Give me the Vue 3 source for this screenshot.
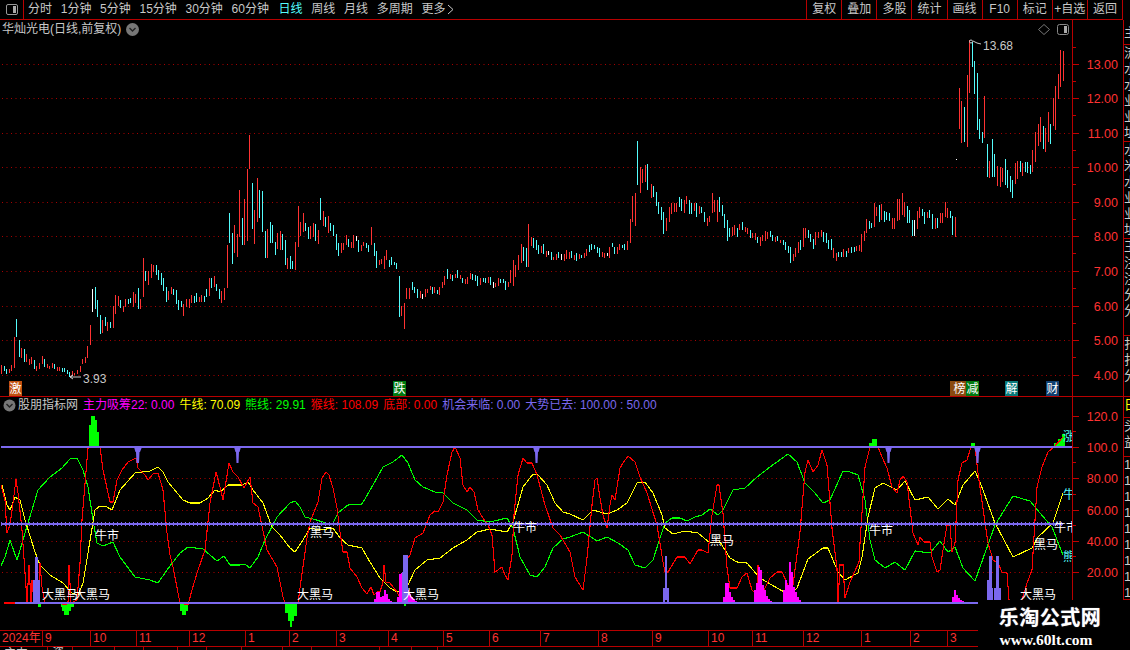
<template>
  <div class="app">
    <!-- top toolbar -->
    <div class="toolbar">
      <div class="panel-btn">
        <span class="panel-icon"><i></i></span>
      </div>
      <div class="periods">
        <span v-for="p in periods" :key="p" class="period" :class="{ active: p === '日线' }">{{ p }}</span>
        <span class="period more">更多
          <svg width="7" height="11" viewBox="0 0 7 11" fill="none" stroke="#c8c8c8" stroke-width="1"><polyline points="1,1 6,5.5 1,10" /></svg>
        </span>
      </div>
      <div class="actions">
        <span v-for="a in actions" :key="a" class="action">{{ a }}</span>
      </div>
    </div>

    <div class="workspace">
      <!-- price pane -->
      <div class="pane main-pane">
        <div class="pane-title">
          <span>华灿光电(日线,前复权)</span>
          <svg class="drop" width="13" height="13" viewBox="0 0 13 13"><circle cx="6.5" cy="6.5" r="6.5" fill="#777" /><polyline points="3.5,5 6.5,8 9.5,5" fill="none" stroke="#222" stroke-width="1.4" /></svg>
        </div>
        <svg class="chart" width="1072" height="376" viewBox="0 20 1072 376">
          <line v-for="y in priceGrid" :key="y" x1="2" x2="1072" :y1="y + 0.5" :y2="y + 0.5" class="dots" />
          <path :d="barPath.r" class="bar" stroke="#ff3232" />
          <path :d="barPath.c" class="bar" stroke="#54fcfc" />
          <path :d="barPath.w" class="bar" stroke="#ffffff" />
          <rect x="956" y="159" width="1" height="1" fill="#fff" />
          <!-- high / low labels -->
          <polyline points="81,377 70,377 73,375 70,377 73,379" fill="none" stroke="#c8c8c8" />
          <text x="83" y="383" class="tag">3.93</text>
          <circle cx="971" cy="41.5" r="1.5" fill="none" stroke="#c8c8c8" />
          <polyline points="973,41 977,43 981,44" fill="none" stroke="#c8c8c8" />
          <text x="983" y="50" class="tag">13.68</text>
          <!-- diamond and pane button -->
          <polygon points="1044,24.5 1049.5,29.5 1044,34.5 1038.5,29.5" fill="none" stroke="#777" />
          <rect x="1057.5" y="24.5" width="11" height="10" rx="2" fill="none" stroke="#888" />
          <rect x="1064" y="26" width="3" height="7" fill="#aaa" />
          <!-- event markers -->
          <g v-for="m in markers" :key="m.text">
            <rect :x="m.x" y="381" :width="m.w" height="15" :fill="m.bg" />
            <text :x="m.x + m.w - 6.5" y="393" class="marker">{{ m.text }}</text>
          </g>
        </svg>
        <svg class="axis" width="50" height="376" viewBox="1073 20 50 376">
          <g v-for="(t, i) in priceTicks" :key="t.label">
            <line x1="1073" x2="1079" :y1="t.y + 0.5" :y2="t.y + 0.5" class="tick" />
            <line v-if="i < 9" x1="1073" x2="1076" :y1="t.y + 17.5" :y2="t.y + 17.5" class="tick" />
            <text x="1118" :y="t.y + 5" class="axis-label">{{ t.label }}</text>
          </g>
          <line x1="1073" x2="1076" y1="47.5" y2="47.5" class="tick" />
        </svg>
      </div>

      <!-- side strip -->
      <div class="strip">
        <div v-for="(s, i) in strip" :key="i" class="strip-sec" :style="{ height: s.h + 'px', color: s.color }">
          <div v-for="(c, j) in s.text" :key="j">{{ c }}</div>
        </div>
      </div>

      <!-- indicator pane -->
      <div class="pane ind-pane">
        <div class="ind-title">
          <svg width="13" height="13" viewBox="0 0 13 13"><circle cx="6.5" cy="6.5" r="6" fill="#777" /><polyline points="3.5,5 6.5,8 9.5,5" fill="none" stroke="#222" stroke-width="1.4" /></svg>
          <span class="ind-name">股朋指标网</span>
          <span v-for="l in legend" :key="l.text" :style="{ color: l.color }">{{ l.text }}</span>
        </div>
        <svg class="chart" width="1072" height="233" viewBox="0 397 1072 233">
          <line v-for="y in [478, 510, 541, 572]" :key="y" x1="2" x2="1072" :y1="y + 0.5" :y2="y + 0.5" class="dots" />

          <path d="M89 447V425H91V416H95V420H97V432H99V447ZM869 447V443H872V439H877V447ZM971 447V443H975V447ZM1054 447V443H1058V439H1062V434H1065V447Z" fill="#00ff00" />
          <path d="M38 604H41V607H38ZM61 604H74V607H71V611H69V615H64V611H62V607H61ZM180 604H188V611H186V615H182V611H180ZM285 604H297V616H294V621H292V627H290V621H288V613H285ZM404 604H406V606H404Z" fill="#00ff00" />

          <polyline :points="green" class="line" stroke="#00ff00" />
          <polyline :points="yellow" class="line" stroke="#ffff00" />
          <polyline :points="red" class="line" stroke="#ff0000" />
          <polyline points="1022,600 1027,583 1032,570 1037,487 1042,467 1048,452 1054,447 1063,437" class="line" stroke="#ff0000" />
          <polyline points="4,603 15,603" class="line" stroke="#ff0000" />

          <rect v-for="m in magenta" :key="m[0]" :x="m[0]" :y="m[1]" width="2" :height="603 - m[1]" fill="#ff00ff" />

          <!-- purple levels -->
          <line x1="1" x2="1072" y1="447" y2="447" class="level" />
          <path d="M134 447H142L140 452H139.5L139 463H136.5L136 452H135.5ZM234 447H241L239.5 452H239L238.5 463H236.5L236 452H235.5ZM533 447H540L538.5 452H538L537.5 463H535.5L535 452H534.5ZM885 447H892L890.5 452H890L889.5 463H887.5L887 452H886.5ZM974 447H981L979.5 452H979L978.5 463H976.5L976 452H975.5Z" fill="#7b68ee" />
          <line x1="1" x2="1063" y1="524" y2="524" class="mid" />
          <line x1="1" x2="1063" y1="524" y2="524" class="mid-ticks" />
          <line x1="15" x2="978" y1="603" y2="603" class="level" />
          <path d="M33 603V580H35V557H38V580H40V603ZM402 603V572H403V555H408V603ZM663 603V588H665V556H667V588H669V603H667V600H665V603ZM987 600V580H989V556H992V588H993V600ZM994 600V588H996V556H999V588H1001V600Z" fill="#7b68ee" />

          <!-- signal captions -->
          <text v-for="t in signals" :key="t.x" :x="t.x" :y="t.y" class="signal" :class="t.cls">{{ t.text }}</text>
        </svg>
        <svg class="axis" width="50" height="233" viewBox="1073 397 50 233">
          <g v-for="t in indTicks" :key="t.label">
            <line x1="1073" x2="1079" :y1="t.y + 0.5" :y2="t.y + 0.5" class="tick" />
            <line v-if="t.y > 420" x1="1073" x2="1076" :y1="t.y - 15.5" :y2="t.y - 15.5" class="tick" />
            <text x="1118" :y="t.y + 5" class="axis-label">{{ t.label }}</text>
          </g>
        </svg>
      </div>

      <!-- date axis -->
      <div class="dates">
        <div class="date-row">
          <span class="year">2024年</span>
          <span v-for="d in dates" :key="d.x" class="date" :style="{ width: d.w + 'px' }">{{ d.text }}</span>
        </div>
        <div class="bottom-row">
          <span v-for="c in bottomCells" :key="c.x" class="cell" :style="{ width: c.w + 'px' }">{{ c.text }}</span>
        </div>
      </div>
    </div>

    <!-- watermark -->
    <div class="watermark">
      <div class="wm-cn">乐淘公式网</div>
      <div class="wm-en">www.60lt.com</div>
    </div>
  </div>
</template>

<script setup>
import { computed } from 'vue'

const periods = ['分时', '1分钟', '5分钟', '15分钟', '30分钟', '60分钟', '日线', '周线', '月线', '多周期']
const actions = ['复权', '叠加', '多股', '统计', '画线', 'F10', '标记', '+自选', '返回']

// x top bottom colour, read off the chart
const rawBars = `1 365 374 r,4 366 371 c,6 369 374 c,9 369 373 r,11 365 371 r,14 337 368 r,16 319 337 c,19 340 357 c,21 348 358 r,24 349 362 c,26 354 362 r,29 359 365 r,31 357 364 r,34 360 369 c,36 366 371 r,39 363 369 r,42 356 364 r,44 359 367 c,47 364 368 r,49 366 369 r,52 363 368 r,54 364 369 c,57 367 371 r,59 367 371 r,62 368 372 c,64 368 372 c,67 370 374 c,69 372 377 c,72 371 376 r,74 373 375 r,77 370 374 r,80 366 372 r,82 359 364 r,85 357 363 r,87 346 358 r,90 325 345 r,92 289 312 w,95 287 309 c,97 300 317 c,100 315 334 c,102 320 333 r,105 317 326 c,107 322 331 r,110 322 328 c,113 306 328 r,115 295 314 r,118 296 306 r,120 300 308 c,123 306 312 r,125 299 307 r,128 299 304 c,130 298 303 c,133 292 307 r,135 294 303 r,138 288 309 c,140 299 309 r,143 258 297 r,145 271 281 c,148 271 285 r,151 264 278 r,153 265 272 r,156 265 275 c,158 270 280 c,161 273 285 c,163 278 291 c,166 287 302 c,168 291 300 r,171 287 294 r,173 289 295 c,176 290 304 c,178 300 310 c,181 301 307 c,183 304 316 r,186 299 307 r,189 299 308 r,191 295 303 r,194 296 303 c,196 293 302 c,199 297 302 r,201 295 302 r,204 296 302 c,206 289 297 c,209 278 296 r,211 278 288 c,214 276 287 r,216 284 291 c,219 289 299 c,221 291 303 r,224 288 300 r,227 245 288 r,229 213 243 c,232 233 264 c,234 225 253 r,237 234 257 r,239 190 237 r,242 218 245 c,244 199 245 r,247 169 241 r,249 135 169 r,252 183 229 c,254 210 244 r,257 178 222 r,259 190 218 c,262 191 232 c,265 231 258 c,267 229 258 r,270 222 243 c,272 225 243 c,275 242 255 c,277 233 249 r,280 231 250 r,282 234 250 c,285 240 265 c,287 258 269 r,290 256 269 c,292 261 269 c,295 242 270 r,298 206 247 r,
300 222 236 r,303 213 232 r,305 223 231 c,308 227 239 c,310 226 239 r,313 223 237 r,315 224 241 c,318 230 244 r,320 198 220 c,323 211 226 r,325 217 227 c,328 216 233 r,330 223 231 c,333 225 236 c,336 234 250 c,338 243 256 c,341 243 253 r,343 243 250 r,346 235 245 r,348 239 247 c,351 242 248 r,353 235 248 r,356 236 241 w,358 240 252 c,361 245 251 r,363 242 246 r,366 243 248 c,368 245 252 c,371 227 245 r,374 243 256 c,376 251 268 c,379 260 265 r,381 259 264 r,384 256 269 r,386 250 260 r,389 260 267 c,391 257 265 c,394 262 265 c,396 263 269 c,399 276 317 c,401 306 316 r,404 303 329 r,406 288 299 r,409 288 299 r,412 282 290 c,414 287 293 c,417 289 298 c,420 291 298 r,422 294 299 w,425 289 297 r,427 289 293 r,430 286 290 r,432 287 294 c,434 287 293 r,437 290 294 c,439 287 295 r,442 282 288 r,444 276 285 r,447 269 279 c,450 274 279 r,452 275 281 c,455 274 278 r,457 270 278 c,460 275 279 r,462 278 283 c,465 279 284 r,467 277 284 r,470 273 279 r,472 274 280 c,475 275 281 c,477 276 286 c,480 278 285 r,483 278 282 c,485 278 283 c,488 277 283 r,490 277 285 c,493 282 288 w,495 283 287 r,498 278 286 r,500 279 283 c,503 279 283 c,505 281 290 c,508 282 287 r,510 270 283 r,513 260 286 r,515 265 277 r,518 255 270 r,521 244 263 r,523 247 261 c,526 248 267 c,528 224 267 r,531 237 246 r,533 238 248 c,536 240 250 c,538 245 254 c,541 246 253 r,543 244 254 c,546 251 257 r,548 251 255 w,551 252 260 c,553 257 260 r,556 254 260 r,558 252 258 c,561 254 260 w,564 254 261 r,566 250 259 r,569 252 259 r,571 251 258 c,574 255 260 r,576 253 261 c,579 254 259 r,581 255 258 c,584 253 258 r,586 249 256 r,589 245 252 c,591 244 250 c,594 245 249 c,597 247 253 c,599 248 257 c,602 252 257 r,604 253 258 r,607 253 256 w,609 247 258 r,612 243 247 c,614 247 254 c,617 247 254 r,619 244 250 r,622 245 248 c,624 244 250 c,627 241 250 r,630 219 243 r,632 196 222 r,635 193 226 r,637 141 185 c,640 167 193 r,642 169 183 r,645 165 182 r,647 164 190 c,
651 184 198 r,653 186 197 c,656 192 206 c,658 202 214 c,661 207 220 c,663 212 234 c,666 218 231 r,669 207 222 r,671 203 214 r,674 203 212 r,676 203 212 r,679 197 207 c,681 199 211 c,684 200 213 r,686 196 204 r,689 200 214 c,691 203 214 c,694 203 211 r,696 203 217 c,699 206 214 r,701 207 213 c,704 212 222 c,707 218 226 r,709 216 222 r,712 193 213 r,714 200 212 r,717 200 222 r,719 197 212 c,722 205 216 c,724 214 228 c,727 220 241 c,729 228 237 c,732 227 236 r,734 225 235 r,737 228 237 c,739 224 230 r,742 222 230 c,745 227 232 r,747 228 234 r,750 230 238 c,752 233 238 r,755 233 240 r,757 237 243 c,760 237 246 r,762 235 241 r,765 231 241 r,767 232 239 r,770 231 237 c,772 235 241 c,775 237 242 r,777 236 241 c,780 240 243 r,783 240 245 c,785 242 250 c,788 246 253 c,790 247 263 c,793 254 261 r,795 248 257 r,798 242 253 r,800 240 250 c,803 228 247 r,805 228 238 r,808 230 238 c,810 234 242 c,813 239 249 c,815 232 245 r,818 232 238 r,821 230 237 r,823 232 242 c,826 233 243 c,828 240 249 c,831 239 250 c,833 248 258 r,836 253 261 r,838 252 257 c,841 252 257 c,843 249 257 r,846 251 257 c,848 248 253 r,851 247 253 c,854 247 252 c,856 246 251 r,859 245 251 r,861 234 252 r,864 231 241 r,866 219 233 r,869 221 229 c,871 223 228 c,874 203 227 r,876 207 216 r,879 205 222 c,881 204 220 r,884 211 222 c,886 212 220 c,889 213 221 c,892 218 229 r,894 218 229 r,897 199 221 r,899 199 220 r,902 193 215 r,904 202 217 r,907 206 223 c,909 210 223 c,912 220 236 c,914 220 236 w,917 211 229 r,919 207 218 r,922 209 216 c,924 212 224 c,927 212 218 r,929 210 218 c,932 214 229 c,935 218 229 r,937 218 228 c,940 213 223 r,942 213 223 r,945 202 217 r,947 208 218 r,950 211 218 c,952 216 235 c,955 217 237 r,
959 88 129 r,961 101 143 r,964 107 142 c,967 75 147 r,969 40 93 r,972 42 67 c,974 61 94 c,977 73 130 c,979 119 139 c,982 132 143 c,984 96 138 r,987 144 177 c,989 161 178 r,992 139 177 c,994 154 177 c,997 166 186 r,1000 167 187 r,1002 168 182 r,1005 159 185 c,1007 170 188 c,1010 176 192 c,1012 180 198 c,1015 163 184 r,1017 161 179 r,1020 161 172 c,1022 163 176 r,1025 162 172 c,1027 162 173 c,1030 165 174 c,1032 150 172 r,1035 132 162 r,1038 124 146 r,1040 117 142 r,1043 126 149 c,1045 128 152 r,1048 112 142 r,1050 124 144 c,1053 98 126 r,1055 86 130 r,1058 74 99 r,1060 50 87 r,1063 51 81 r`

const barPath = computed(() => {
  const out = { r: '', c: '', w: '' }
  rawBars.split(',').map(s => s.trim()).filter(Boolean).forEach(s => {
    const [x, t, b, c] = s.split(' ')
    out[c] += `M${+x + 0.5} ${t}V${b}`
  })
  return out
})

const priceGrid = [64, 98, 133, 167, 202, 236, 271, 306, 340, 375]
const priceTicks = ['13.00', '12.00', '11.00', '10.00', '9.00', '8.00', '7.00', '6.00', '5.00', '4.00']
  .map((label, i) => ({ label, y: priceGrid[i] }))
const indTicks = [
  { label: '120.0', y: 416 }, { label: '100.0', y: 447 }, { label: '80.00', y: 478 },
  { label: '60.00', y: 510 }, { label: '40.00', y: 541 }, { label: '20.00', y: 572 }
]

const markers = [
  { text: '激', x: 9, w: 13, bg: '#c2500f' },
  { text: '跌', x: 393, w: 13, bg: '#007a10' },
  { text: '榜', x: 950, w: 16, bg: '#8a4a10' },
  { text: '减', x: 966, w: 13, bg: '#007a10' },
  { text: '解', x: 1005, w: 13, bg: '#087a7a' },
  { text: '财', x: 1046, w: 13, bg: '#103f70' }
]

const legend = [
  { text: '主力吸筹22: 0.00', color: '#ff00ff' },
  { text: '牛线: 70.09', color: '#ffff00' },
  { text: '熊线: 29.91', color: '#00ff00' },
  { text: '猴线: 108.09', color: '#ff0000' },
  { text: '底部: 0.00', color: '#ff0000' },
  { text: '机会来临: 0.00', color: '#7b68ee' },
  { text: '大势已去: 100.00 : 50.00', color: '#7b68ee' }
]

const green = '1,566 5,557 10,540 17,560 23,540 28,523 38,490 50,477 62,468 70,459 77,458 83,470 88,487 93,520 97,543 103,546 113,542 120,557 135,577 150,580 158,583 167,570 180,553 188,547 203,549 217,561 224,556 230,565 240,565 245,564 250,568 258,557 265,540 277,517 290,503 295,501 300,507 305,517 313,519 323,522 332,525 338,513 348,505 362,504 373,485 383,467 393,462 402,455 408,463 415,480 423,487 435,492 443,493 453,503 467,510 477,520 490,522 507,518 513,528 520,557 530,575 537,577 545,567 553,548 563,539 570,537 583,532 597,541 607,537 618,543 628,550 635,565 645,568 653,560 660,538 665,523 672,518 680,518 687,521 695,517 702,515 710,509 718,515 723,510 733,490 745,488 757,477 770,467 788,454 797,462 805,483 815,493 823,503 830,500 843,471 850,472 858,475 865,500 870,540 875,560 885,568 895,562 905,570 915,551 930,553 940,541 948,552 955,547 963,568 975,581 995,525 1013,496 1030,501 1040,513 1052,527 1063,555'
const yellow = '2,485 7,505 10,510 15,497 20,500 25,520 35,552 40,565 50,575 63,583 72,593 78,595 83,583 88,553 95,510 100,506 107,507 112,510 120,490 135,473 150,471 158,467 163,472 168,482 183,500 190,503 200,503 208,498 215,490 220,492 228,485 242,485 248,482 253,490 263,503 272,527 280,535 290,548 295,552 303,540 310,528 320,530 333,528 340,538 348,545 362,548 370,562 380,578 390,588 397,592 407,587 415,570 427,560 440,558 453,548 467,540 477,532 490,529 507,532 513,522 523,487 533,474 538,475 547,485 555,503 563,512 570,514 583,520 593,510 607,514 617,510 627,503 637,483 645,482 653,493 662,515 665,528 673,534 685,531 698,533 710,543 720,542 730,558 737,562 747,563 760,578 777,588 790,595 797,588 808,559 823,548 828,548 838,572 845,580 858,573 862,557 868,517 875,488 883,483 897,490 905,481 915,500 928,497 938,509 948,499 955,505 963,485 975,471 980,482 995,523 1013,557 1032,548 1038,537 1053,523 1063,493'
const red = '1,485 5,500 7,533 10,525 13,503 16,479 18,493 22,530 26,587 27,603 29,565 31,603 32,580 34,603 37,587 39,603 40,563 42,587 45,603 60,603 65,605 68,603 69,565 71,603 77,600 80,563 82,520 88,448 100,447 103,470 110,502 113,502 117,480 122,470 128,462 136,458 138,468 145,475 148,480 153,474 158,473 163,490 167,533 170,555 173,567 180,603 188,605 192,590 197,573 205,550 210,503 216,472 220,487 223,500 229,463 233,472 238,477 244,488 250,477 253,503 258,507 267,550 277,567 283,597 285,603 298,603 300,588 307,538 310,522 318,502 322,478 326,472 329,475 333,488 337,508 340,532 343,552 347,552 350,568 357,577 362,588 367,594 371,587 374,595 377,592 380,592 383,582 384,565 386,582 390,583 397,592 400,598 403,603 405,562 410,555 415,538 423,533 430,515 435,511 438,512 443,502 447,475 452,452 455,447 460,458 463,485 467,492 470,487 474,492 478,510 483,518 488,525 492,535 495,572 502,567 505,575 508,580 512,555 514,515 518,475 523,458 527,463 532,463 537,475 545,505 553,528 560,535 570,552 575,577 583,590 587,558 592,505 595,480 597,478 600,498 603,515 607,528 610,505 612,495 615,500 620,468 623,463 628,456 635,462 640,477 647,493 657,525 663,562 665,572 668,572 677,557 685,557 690,564 698,550 702,550 708,553 712,515 717,485 719,485 723,513 727,568 730,588 737,588 742,577 747,573 752,590 757,595 758,565 762,595 765,588 770,578 777,572 782,572 787,583 790,598 793,585 800,532 805,472 808,460 813,472 818,465 822,450 827,465 832,528 837,568 838,603 840,565 843,565 845,598 850,582 859,562 860,543 865,467 870,447 878,447 882,457 887,468 892,487 897,493 900,480 903,476 907,482 913,533 918,545 920,537 924,542 930,542 932,557 937,572 940,570 945,537 947,525 950,525 952,552 955,543 958,480 962,463 967,460 971,447 975,447 978,473 988,543 993,560 998,563 1002,572 1007,573 1009,600'

// [x, top] columns of the accumulation histogram
const magenta = [
  [374, 599], [376, 592], [378, 592], [380, 597], [382, 596], [384, 590], [386, 594], [388, 599], [390, 601],
  [397, 597], [399, 574], [401, 573], [403, 573], [405, 590], [407, 590], [409, 594], [411, 597], [413, 599], [415, 601],
  [723, 597], [725, 583], [727, 583], [729, 592], [731, 597], [733, 600],
  [754, 590], [756, 583], [758, 567], [760, 570], [762, 585], [764, 590], [766, 596], [768, 599], [770, 601],
  [783, 590], [785, 580], [787, 585], [789, 562], [791, 572], [793, 587], [795, 592], [797, 597], [799, 600],
  [952, 597], [954, 590], [956, 595], [958, 598], [960, 600], [962, 601]
]

const signals = [
  { x: 95, y: 540, text: '牛市' },
  { x: 310, y: 537, text: '黑马' },
  { x: 513, y: 532, text: '牛市' },
  { x: 710, y: 545, text: '黑马' },
  { x: 869, y: 535, text: '牛市' },
  { x: 1054, y: 532, text: '牛市' },
  { x: 1034, y: 549, text: '黑马' },
  { x: 42, y: 599, text: '大黑马' },
  { x: 74, y: 599, text: '大黑马' },
  { x: 297, y: 599, text: '大黑马' },
  { x: 403, y: 599, text: '大黑马' },
  { x: 1020, y: 599, text: '大黑马' },
  { x: 1063, y: 441, text: '涨', cls: 'cyan' },
  { x: 1063, y: 499, text: '牛', cls: 'cyan' },
  { x: 1063, y: 561, text: '熊', cls: 'cyan' }
]

// tick widths between month labels
const dates = [
  { x: 1, text: '9', w: 48 }, { x: 2, text: '10', w: 46 }, { x: 3, text: '11', w: 53 }, { x: 4, text: '12', w: 56 },
  { x: 5, text: '1', w: 44 }, { x: 6, text: '2', w: 47 }, { x: 7, text: '3', w: 52 }, { x: 8, text: '4', w: 55 },
  { x: 9, text: '5', w: 46 }, { x: 10, text: '6', w: 51 }, { x: 11, text: '7', w: 58 }, { x: 12, text: '8', w: 54 },
  { x: 13, text: '9', w: 56 }, { x: 14, text: '10', w: 44 }, { x: 15, text: '11', w: 51 }, { x: 16, text: '12', w: 58 },
  { x: 17, text: '1', w: 49 }, { x: 18, text: '2', w: 37 }, { x: 19, text: '3', w: 28 }
]

// cell ticks on the row under the dates
const bottomCells = [
  { x: 1, w: 48, text: '主力' }, { x: 2, w: 25, text: '资' }, { x: 3, w: 42 }, { x: 4, w: 29 }, { x: 5, w: 34 },
  { x: 6, w: 29 }, { x: 7, w: 35 }, { x: 8, w: 41 }, { x: 9, w: 29 }, { x: 10, w: 68 }, { x: 11, w: 32 }, { x: 12, w: 26 }
]

const strip = [
  { h: 20, text: ['主'], color: '#ccc' },
  { h: 97, text: ['流', '水', '水', '业', '业', '址'], color: '#ccc' },
  { h: 97, text: ['水', '米', '水', '业', '业', '址'], color: '#ccc' },
  { h: 97, text: ['王', '注', '注', '分', '分'], color: '#ccc' },
  { h: 61, text: ['扎', '扎', '分'], color: '#ccc' },
  { h: 21, text: ['日'], color: '#ffff00' },
  { h: 39, text: ['头', '益'], color: '#ccc' },
  { h: 143, text: ['1', '1', '1', '1', '1', '1', '1', '1', '1'], color: '#ccc' }
]
</script>

<style>
html, body {
  margin: 0;
  background: #000;
}
</style>

<style scoped>
.app {
  position: relative;
  width: 1130px;
  height: 650px;
  overflow: hidden;
  background: #000;
  color: #c8c8c8;
  font-family: "Liberation Sans", "Noto Sans CJK SC", sans-serif;
  font-size: 12px;
}

/* ── Toolbar ── */
.toolbar {
  display: flex;
  width: 1123px;
  height: 20px;
  box-sizing: border-box;
  border-bottom: 1px solid #b80000;
}
.panel-btn {
  width: 24px;
  box-sizing: border-box;
  border-right: 1px solid #b80000;
  display: flex;
  align-items: center;
  justify-content: center;
}
.panel-icon {
  position: relative;
  width: 10px;
  height: 9px;
  border: 1px solid #999;
  border-radius: 2px;
}
.panel-icon i {
  position: absolute;
  top: 1px;
  right: 1px;
  bottom: 1px;
  width: 3px;
  background: #aaa;
}
.periods {
  flex: 1;
  display: flex;
  align-items: center;
  gap: 8.7px;
  padding-left: 4px;
  line-height: 19px;
}
.period {
  white-space: nowrap;
}
.period.active {
  color: #54fcfc;
  margin-left: 1px;
}
.more {
  display: flex;
  align-items: center;
  gap: 2px;
}
.actions {
  display: grid;
  grid-template-columns: repeat(9, 35.1px);
  border-right: 1px solid #b80000;
}
.action {
  box-sizing: border-box;
  border-left: 1px solid #b80000;
  text-align: center;
  line-height: 19px;
  white-space: nowrap;
}

/* ── Workspace ── */
.workspace {
  display: grid;
  grid-template-columns: 1123px 7px;
  grid-template-rows: 377px 233px 20px;
}
.pane {
  position: relative;
  display: flex;
}
.main-pane {
  border-bottom: 1px solid #b80000;
  height: 376px;
}
.chart {
  display: block;
  flex: none;
}
.axis {
  display: block;
  flex: none;
  border-left: 1px solid #b80000;
}
.pane-title {
  position: absolute;
  top: 2px;
  left: 2px;
  display: flex;
  align-items: center;
  gap: 4px;
  line-height: 15px;
}
.drop {
  margin-left: 1px;
}
.dots {
  stroke: #a80000;
  stroke-width: 1;
  stroke-dasharray: 1 3.5;
}
.bar {
  fill: none;
  stroke-width: 1;
  shape-rendering: crispEdges;
}
.tag {
  fill: #c8c8c8;
  font-size: 12px;
}
.marker {
  fill: #fff;
  font-size: 12px;
  text-anchor: middle;
}
.tick {
  stroke: #c00000;
  stroke-width: 1;
}
.axis-label {
  fill: #ff3232;
  font-size: 12.5px;
  text-anchor: end;
}

/* ── Side strip ── */
.strip {
  grid-row: 1 / 4;
  grid-column: 2;
  box-sizing: border-box;
  border-left: 1px solid #b80000;
  padding-top: 5px;
  overflow: hidden;
  font-size: 13px;
  line-height: 16px;
}
.strip-sec {
  box-sizing: border-box;
  border-bottom: 1px solid #b80000;
  overflow: hidden;
  white-space: nowrap;
}

/* ── Indicator pane ── */
.ind-pane {
  grid-column: 1;
}
.ind-title {
  position: absolute;
  top: 1px;
  left: 3px;
  z-index: 1;
  display: flex;
  align-items: center;
  gap: 5px;
  line-height: 15px;
  white-space: nowrap;
}
.ind-title svg {
  margin-right: -3px;
}
.line {
  fill: none;
  stroke-width: 1.1;
  shape-rendering: crispEdges;
}
.level {
  stroke: #7b68ee;
  stroke-width: 2;
  shape-rendering: crispEdges;
}
.mid {
  stroke: #7b68ee;
  stroke-width: 2;
  shape-rendering: crispEdges;
}
.mid-ticks {
  stroke: #7b68ee;
  stroke-width: 4;
  stroke-dasharray: 1 3;
  shape-rendering: crispEdges;
}
.signal {
  fill: #fff;
  font-size: 12px;
}
.signal.cyan {
  fill: #54fcfc;
}

/* ── Date axis ── */
.dates {
  grid-column: 1;
  height: 20px;
  overflow: hidden;
}
.date-row {
  display: flex;
  height: 17px;
  box-sizing: border-box;
  border-top: 1px solid #b80000;
  border-bottom: 1px solid #b80000;
  color: #ff3232;
  line-height: 15px;
}
.year {
  width: 42px;
  padding-left: 2px;
  box-sizing: border-box;
  flex: none;
}
.date {
  flex: none;
  box-sizing: border-box;
  padding-left: 2px;
  border-left: 1px solid #b80000;
}
.bottom-row {
  display: flex;
  height: 3px;
  overflow: hidden;
  color: #ccc;
  line-height: 12px;
}
.cell {
  flex: none;
  box-sizing: border-box;
  padding-left: 4px;
  border-right: 1px solid #b80000;
}

/* ── Watermark ── */
.watermark {
  position: absolute;
  left: 978px;
  top: 600px;
  width: 152px;
  height: 50px;
  background: #000;
  text-align: center;
  color: #fff;
  padding: 5px 8px 0 0;
  box-sizing: border-box;
}
.wm-cn {
  font-size: 20px;
  line-height: 26px;
  font-weight: 700;
  letter-spacing: 0.5px;
  text-shadow: 0 0 1px #99a;
}
.wm-en {
  font-family: "Liberation Serif", serif;
  font-size: 15.5px;
  line-height: 17px;
  font-weight: 700;
  padding-right: 8px;
}
</style>
